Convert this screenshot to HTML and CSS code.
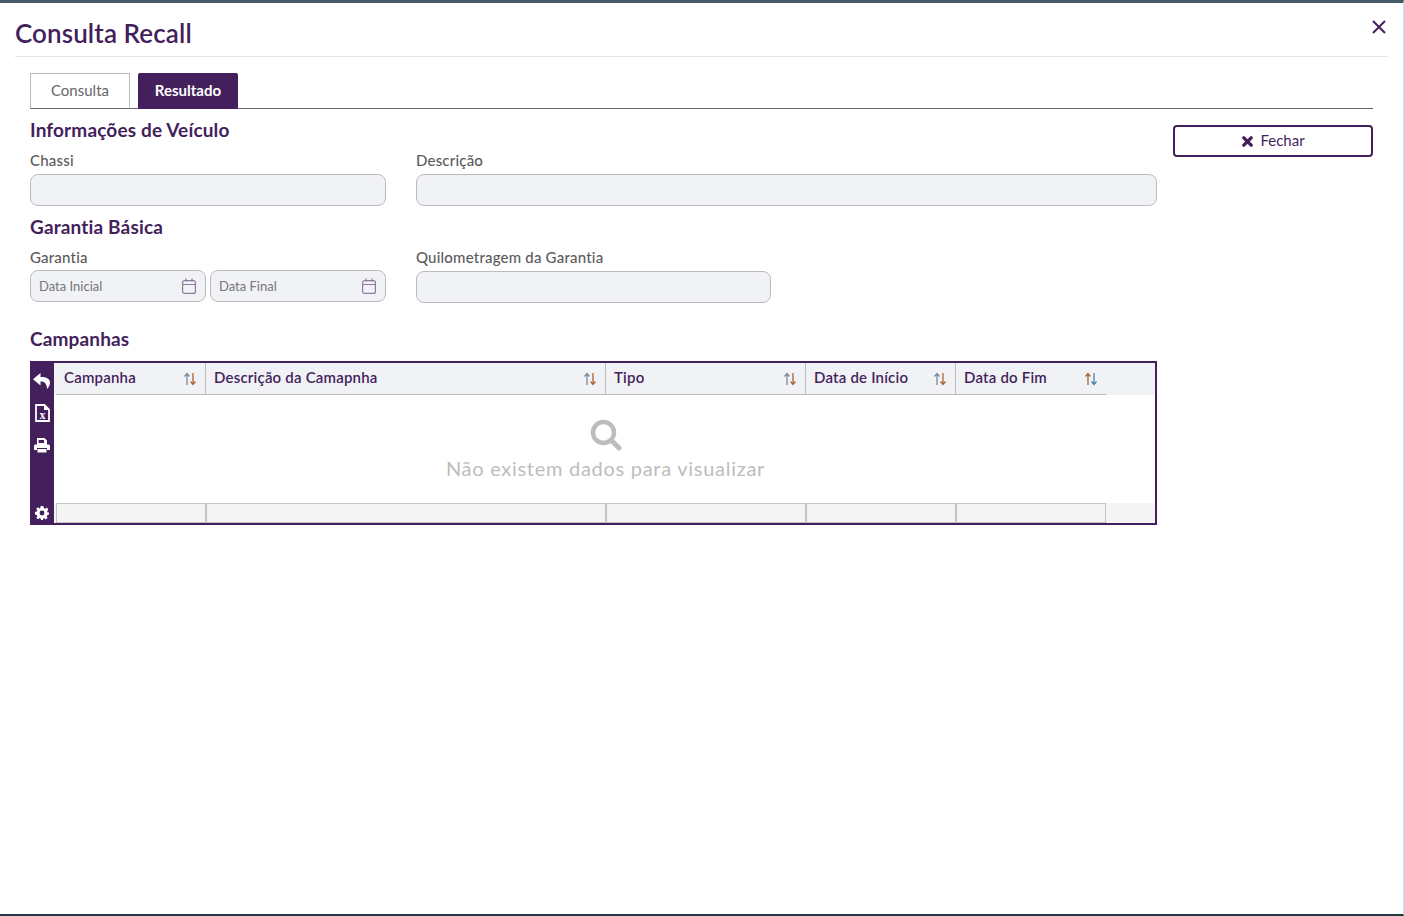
FILE: index.html
```html
<!DOCTYPE html>
<html lang="pt-BR">
<head>
    <meta charset="UTF-8">
    <title>Consulta Recall</title>
    <link rel="stylesheet" href="styles.css">
</head>
<body>
    <div class="modal">
        <div class="modal-header">
            <h1>Consulta Recall</h1>
            <button class="close-x" aria-label="Fechar">
                <svg width="14" height="14" viewBox="0 0 14 14"><path d="M1 1L13 13M13 1L1 13" stroke="#431f5c" stroke-width="2" fill="none"/></svg>
            </button>
        </div>

        <div class="modal-body">
            <div class="tabs">
                <div class="tab">Consulta</div>
                <div class="tab active">Resultado</div>
            </div>

            <div class="main-row">
                <div class="form-col">
                    <h2 class="first">Informações de Veículo</h2>
                    <div class="field-row">
                        <div class="field w-356">
                            <label>Chassi</label>
                            <div class="input"></div>
                        </div>
                        <div class="field w-741">
                            <label>Descrição</label>
                            <div class="input"></div>
                        </div>
                    </div>

                    <h2 class="second">Garantia Básica</h2>
                    <div class="field-row">
                        <div class="field w-356">
                            <label>Garantia</label>
                            <div class="date-pair">
                                <div class="input date">
                                    <span>Data Inicial</span>
                                    <svg width="14" height="16" viewBox="0 0 14 16"><g fill="none" stroke="#8f7a9f" stroke-width="1.2"><rect x="0.6" y="2.6" width="12.8" height="12.8" rx="2"/><path d="M0.6 6.5H13.4M4 0.5V3.5M10 0.5V3.5"/></g></svg>
                                </div>
                                <div class="input date">
                                    <span>Data Final</span>
                                    <svg width="14" height="16" viewBox="0 0 14 16"><g fill="none" stroke="#8f7a9f" stroke-width="1.2"><rect x="0.6" y="2.6" width="12.8" height="12.8" rx="2"/><path d="M0.6 6.5H13.4M4 0.5V3.5M10 0.5V3.5"/></g></svg>
                                </div>
                            </div>
                        </div>
                        <div class="field w-355">
                            <label>Quilometragem da Garantia</label>
                            <div class="input"></div>
                        </div>
                    </div>

                    <h2 class="third">Campanhas</h2>
                    <div class="grid">
                        <div class="grid-tools">
                            <svg class="tool-back" width="17" height="16" viewBox="0 0 17 16"><path fill="#fff" d="M7.5 0L0 6.2L7.5 12.4V8.6C11.5 8.6 13.4 10 14.2 16C16.2 13.6 17 11.5 17 9.6C17 6 14 4 7.5 4Z"/></svg>
                            <svg class="tool-xls" width="15" height="18" viewBox="0 0 15 18"><path fill="none" stroke="#fff" stroke-width="1.8" d="M1 1H9.5L14 5.5V17H1Z"/><path fill="#fff" d="M9 1H10L14 5V6H9Z"/><text x="7.5" y="14.5" fill="#fff" font-size="12" font-weight="700" text-anchor="middle" font-family="Liberation Serif, serif">x</text></svg>
                            <svg class="tool-print" width="16" height="15" viewBox="0 0 16 15"><path fill="#fff" d="M3 0H10.5L13 2.5V6.5H3ZM1.5 6.5H14.5C15.3 6.5 16 7.2 16 8V12H13V10H3V12H0V8C0 7.2 0.7 6.5 1.5 6.5ZM3.5 11H12.5V14.5H3.5Z"/><path fill="#431f5c" d="M4.6 2H10V5H4.6Z"/></svg>
                            <svg class="tool-gear" width="14" height="14" viewBox="0 0 16 16"><path fill="#fff" fill-rule="evenodd" d="M6.5 0H9.5L10 2.4L11.6 3.1L13.6 1.8L15.2 4L13.9 6L14.2 7L16 7.5V9.8L14.2 10.4L13.5 11.9L14.4 13.8L12.2 15.4L10.6 13.9L9.5 14.2L9 16H7L6.5 14.2L5.2 13.7L3.6 15.2L1.5 13.6L2.6 11.7L2 10.3L0 9.8V6.9L2 6.4L2.6 5L1.4 3.2L3.6 1.4L5.2 2.8L6 2.5ZM8 5.2A2.8 2.8 0 1 0 8 10.8A2.8 2.8 0 1 0 8 5.2Z"/></svg>
                        </div>
                        <div class="grid-main">
                            <div class="grid-head">
                                <div class="col c-150">
                                    <span>Campanha</span>
                                    <svg class="sort" width="14" height="14" viewBox="0 0 14 14"><path d="M4 13V2M1.5 4.5L4 1.5L6.5 4.5" stroke="#7a8a96" stroke-width="1.3" fill="none"/><path d="M10 1V12M7.5 9.5L10 12.5L12.5 9.5" stroke="#a8673a" stroke-width="1.3" fill="none"/></svg>
                                </div>
                                <div class="col c-400">
                                    <span>Descrição da Camapnha</span>
                                    <svg class="sort" width="14" height="14" viewBox="0 0 14 14"><path d="M4 13V2M1.5 4.5L4 1.5L6.5 4.5" stroke="#7a8a96" stroke-width="1.3" fill="none"/><path d="M10 1V12M7.5 9.5L10 12.5L12.5 9.5" stroke="#a8673a" stroke-width="1.3" fill="none"/></svg>
                                </div>
                                <div class="col c-200">
                                    <span>Tipo</span>
                                    <svg class="sort" width="14" height="14" viewBox="0 0 14 14"><path d="M4 13V2M1.5 4.5L4 1.5L6.5 4.5" stroke="#7a8a96" stroke-width="1.3" fill="none"/><path d="M10 1V12M7.5 9.5L10 12.5L12.5 9.5" stroke="#a8673a" stroke-width="1.3" fill="none"/></svg>
                                </div>
                                <div class="col c-150">
                                    <span>Data de Início</span>
                                    <svg class="sort" width="14" height="14" viewBox="0 0 14 14"><path d="M4 13V2M1.5 4.5L4 1.5L6.5 4.5" stroke="#7a8a96" stroke-width="1.3" fill="none"/><path d="M10 1V12M7.5 9.5L10 12.5L12.5 9.5" stroke="#a8673a" stroke-width="1.3" fill="none"/></svg>
                                </div>
                                <div class="col c-150 last">
                                    <span>Data do Fim</span>
                                    <svg class="sort" width="14" height="14" viewBox="0 0 14 14"><path d="M4 13V2M1.5 4.5L4 1.5L6.5 4.5" stroke="#a8673a" stroke-width="1.3" fill="none"/><path d="M10 1V12M7.5 9.5L10 12.5L12.5 9.5" stroke="#3f86b5" stroke-width="1.3" fill="none"/></svg>
                                </div>
                            </div>
                            <div class="grid-empty">
                                <svg width="32" height="32" viewBox="0 0 32 32"><circle cx="13.5" cy="13.5" r="10.5" fill="none" stroke="#bdbdbd" stroke-width="4.5"/><path d="M21.5 21.5L29 29" stroke="#bdbdbd" stroke-width="5" stroke-linecap="round"/></svg>
                                <p>Não existem dados para visualizar</p>
                            </div>
                            <div class="grid-foot">
                                <div class="foot-cell c-150"></div>
                                <div class="foot-cell c-400"></div>
                                <div class="foot-cell c-200"></div>
                                <div class="foot-cell c-150"></div>
                                <div class="foot-cell c-150"></div>
                            </div>
                        </div>
                    </div>
                </div>

                <div class="side-col">
                    <button class="btn-close">
                        <svg width="11" height="11" viewBox="0 0 12 12"><path d="M2 2L10 10M10 2L2 10" stroke="#431f5c" stroke-width="3.6" stroke-linecap="round"/></svg>
                        <span>Fechar</span>
                    </button>
                </div>
            </div>
        </div>
    </div>
</body>
</html>
```

FILE: styles.css
```css
* {
    box-sizing: border-box;
}

body {
    margin: 0;
    background: #fff;
    font-family: "Lato", "Noto Sans", sans-serif;
    color: #431f5c;
}

.modal {
    height: 916px;
    border-top: 3px solid #445a66;
    border-bottom: 2px solid #1f3540;
    border-right: 1px solid #b5e3f5;
    padding: 0 15px;
    overflow: hidden;
}

.modal-header {
    display: flex;
    justify-content: space-between;
    align-items: flex-start;
    height: 54px;
    border-bottom: 1px solid #e5e5e5;
}

.modal-header h1 {
    margin: 14px 0 0;
    font-size: 26px;
    line-height: 32px;
    font-weight: 600;
    letter-spacing: 0.1px;
}

.close-x {
    margin: 17px 2px 0 0;
    padding: 0;
    border: none;
    background: none;
    line-height: 0;
}

.modal-body {
    padding: 16px 15px 0;
}

.tabs {
    display: flex;
    gap: 8px;
    height: 36px;
    border-bottom: 1px solid #666;
}

.tab {
    width: 100px;
    height: 36px;
    border: 1px solid #bbb;
    border-bottom: 1px solid #666;
    background: #fff;
    color: #666;
    font-size: 15px;
    line-height: 32px;
    text-align: center;
}

.tab.active {
    border: none;
    border-radius: 2px 2px 0 0;
    background: #431f5c;
    color: #fff;
    font-weight: 700;
    line-height: 35px;
}

.main-row {
    display: flex;
    gap: 16px;
}

.form-col {
    width: 1127px;
}

h2 {
    margin: 0;
    font-size: 19px;
    line-height: 24px;
    font-weight: 700;
    letter-spacing: 0.15px;
}

h2.first {
    margin-top: 9px;
}

h2.second {
    margin-top: 9px;
}

h2.third {
    margin-top: 24px;
}

.field-row {
    display: flex;
    gap: 30px;
    margin-top: 8px;
}

.field label {
    display: block;
    height: 24px;
    color: #5b5b5b;
    font-size: 15px;
    font-weight: 500;
    line-height: 20px;
    letter-spacing: 0.2px;
}

.w-356 {
    width: 356px;
}

.w-741 {
    width: 741px;
}

.w-355 {
    width: 355px;
}

.input {
    height: 32px;
    background: #f1f2f6;
    border: 1px solid #bbb;
    border-radius: 8px;
}

.date-pair {
    display: flex;
    gap: 4px;
    margin-top: -1px;
}

.input.date {
    display: flex;
    flex: 1;
    align-items: center;
    justify-content: space-between;
    padding: 0 9px 0 8px;
    color: #777;
    font-size: 13px;
}

.grid {
    display: flex;
    height: 164px;
    margin-top: 10px;
    border: 2px solid #431f5c;
    border-left: none;
}

.grid-tools {
    position: relative;
    width: 24px;
    background: #431f5c;
    flex: none;
}

.grid-tools svg {
    position: absolute;
}

.tool-back {
    top: 10px;
    left: 3px;
}

.tool-xls {
    top: 41px;
    left: 5px;
}

.tool-print {
    top: 75px;
    left: 4px;
}

.tool-gear {
    top: 143px;
    left: 5px;
}

.grid-main {
    display: flex;
    flex: 1;
    flex-direction: column;
    min-width: 0;
}

.grid-head {
    display: flex;
    height: 32px;
    padding-left: 2px;
    background: #f1f2f6;
}

.col {
    display: flex;
    align-items: center;
    justify-content: space-between;
    height: 32px;
    padding: 0 8px 4px;
    border-right: 1px solid #bbb;
    border-bottom: 1px solid #bbb;
    font-size: 15px;
    font-weight: 600;
    letter-spacing: 0.2px;
}

.col.last {
    border-right: none;
}

.col .sort {
    margin-top: 4px;
}

.c-150 {
    width: 150px;
}

.c-400 {
    width: 400px;
}

.c-200 {
    width: 200px;
}

.grid-empty {
    flex: 1;
    padding: 24px 0 0 2px;
    text-align: center;
    line-height: 0;
}

.grid-empty p {
    margin: 4px 0 0;
    color: #bdbdbd;
    font-size: 20px;
    line-height: 26px;
    letter-spacing: 0.72px;
}

.grid-foot {
    display: flex;
    height: 20px;
    padding-left: 2px;
    background: #f4f4f4;
}

.foot-cell {
    height: 20px;
    border: 1px solid #c4c4c4;
    background: #f4f4f4;
}

.side-col {
    width: 200px;
    padding-top: 16px;
}

.btn-close {
    display: flex;
    align-items: center;
    justify-content: center;
    gap: 7px;
    width: 200px;
    height: 32px;
    padding: 0 0 2px 1px;
    background: #fff;
    border: 2px solid #431f5c;
    border-radius: 4px;
    color: #431f5c;
    font-family: inherit;
    font-size: 15px;
}

.btn-close svg {
    margin-top: 2px;
}
```
